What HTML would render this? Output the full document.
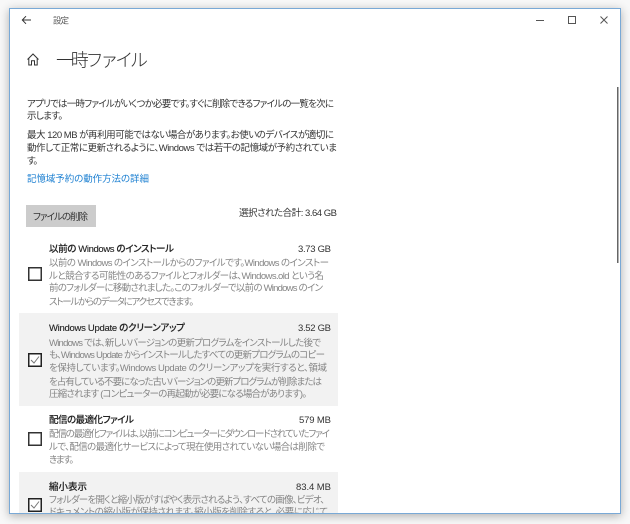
<!DOCTYPE html>
<html><head><meta charset="utf-8"><style>
html,body{margin:0;padding:0;width:630px;height:524px;overflow:hidden;background:#f8f8f8}
#win{position:absolute;left:9px;top:8px;width:610px;height:504px;background:#fff;border:1px solid #79a9d6;box-shadow:0 2px 9px rgba(0,0,0,.3)}
svg{position:absolute;left:0;top:0}
text{font-family:"Liberation Sans","Noto Sans CJK JP",sans-serif;font-size:9.500px;fill:#333;font-feature-settings:"palt";white-space:pre;filter:blur(.25px)}
.d{fill:#858585}
.t{font-weight:500;fill:#222;stroke:#222;stroke-width:.12px}
</style></head><body>
<div id="win"></div>
<svg width="630" height="524" viewBox="0 0 630 524" xmlns="http://www.w3.org/2000/svg">
<defs><clipPath id="c"><rect x="10" y="9" width="610" height="504"/></clipPath></defs>
<g clip-path="url(#c)">
<!-- title bar -->
<path d="M31 20H22.500M26 16.200L22.300 20L26 23.800" fill="none" stroke="#333" stroke-width="1"/>
<text x="53" y="23.500" style="font-size:8.500px;fill:#555" textLength="16">設定</text>
<path d="M536 20.500H544" stroke="#555" stroke-width="1"/>
<rect x="568.500" y="16.500" width="7" height="7" fill="none" stroke="#555" stroke-width="1"/>
<path d="M600.500 16.500L607.500 23.500M607.500 16.500L600.500 23.500" stroke="#555" stroke-width="1"/>
<rect x="617" y="87" width="1.500" height="176" fill="#666"/>
<!-- header -->
<path d="M27.500 59.500L33 54L38.500 59.500M28.800 58.500V65H31.500V60.800H34.500V65H37.200V58.500" fill="none" stroke="#333" stroke-width="1"/>
<text x="56" y="66.500" style="font-size:18px;fill:#333;font-weight:300;font-feature-settings:normal" textLength="92">一時ファイル</text>
<!-- intro -->
<text x="27" y="107" textLength="307">アプリでは一時ファイルがいくつか必要です。すぐに削除できるファイルの一覧を次に</text>
<text x="27" y="119" textLength="36">示します。</text>
<text x="27" y="138" textLength="307">最大 120 MB が再利用可能ではない場合があります。お使いのデバイスが適切に</text>
<text x="27" y="151" textLength="310">動作して正常に更新されるように、Windows では若干の記憶域が予約されていま</text>
<text x="27" y="164" textLength="11">す。</text>
<text x="27" y="182" style="fill:#1b7fd1" textLength="122">記憶域予約の動作方法の詳細</text>
<!-- button -->
<rect x="26" y="205" width="70" height="22" fill="#cccccc"/>
<text x="33" y="220" textLength="55">ファイルの削除</text>
<text x="239" y="216" textLength="98">選択された合計: 3.64 GB</text>
<!-- item backgrounds -->
<rect x="19" y="313" width="319" height="93" fill="#f2f2f2"/>
<rect x="19" y="472" width="319" height="42" fill="#f2f2f2"/>
<!-- item 1 -->
<text class="t" x="49" y="252" textLength="125">以前の Windows のインストール</text>
<text x="298" y="252" textLength="33">3.73 GB</text>
<text class="d" x="49" y="266" textLength="280">以前の Windows のインストールからのファイルです。Windows のインストー</text>
<text class="d" x="49" y="279" textLength="275">ルと競合する可能性のあるファイルとフォルダーは、Windows.old という名</text>
<text class="d" x="49" y="291" textLength="274">前のフォルダーに移動されました。このフォルダーで以前の Windows のイン</text>
<text class="d" x="49" y="305" textLength="145">ストールからのデータにアクセスできます。</text>
<rect x="28.750" y="267.750" width="12.500" height="12.500" fill="#fff" stroke="#333" stroke-width="1.500"/>
<!-- item 2 -->
<text class="t" x="49" y="331" textLength="136">Windows Update のクリーンアップ</text>
<text x="298" y="331" textLength="33">3.52 GB</text>
<text class="d" x="49" y="346" textLength="272">Windows では、新しいバージョンの更新プログラムをインストールした後で</text>
<text class="d" x="49" y="358" textLength="276">も、Windows Update からインストールしたすべての更新プログラムのコピー</text>
<text class="d" x="49" y="371" textLength="278">を保持しています。Windows Update のクリーンアップを実行すると、領域</text>
<text class="d" x="49" y="385" textLength="273">を占有している不要になった古いバージョンの更新プログラムが削除または</text>
<text class="d" x="49" y="397" textLength="258">圧縮されます (コンピューターの再起動が必要になる場合があります)。</text>
<rect x="28.750" y="353.750" width="12.500" height="12.500" fill="#fff" stroke="#222" stroke-width="1.500"/>
<path d="M31 360L34 363L39 356.500" fill="none" stroke="#777" stroke-width="1"/>
<!-- item 3 -->
<text class="t" x="49" y="423" textLength="85">配信の最適化ファイル</text>
<text x="299" y="423" textLength="32">579 MB</text>
<text class="d" x="49" y="437" textLength="281">配信の最適化ファイルは、以前にコンピューターにダウンロードされていたファイ</text>
<text class="d" x="49" y="450" textLength="276">ルで、配信の最適化サービスによって現在使用されていない場合は削除で</text>
<text class="d" x="49" y="463" textLength="25">きます。</text>
<rect x="28.750" y="432.750" width="12.500" height="12.500" fill="#fff" stroke="#333" stroke-width="1.500"/>
<!-- item 4 -->
<text class="t" x="49" y="490" textLength="38">縮小表示</text>
<text x="296" y="490" textLength="35">83.4 MB</text>
<text class="d" x="49" y="503" textLength="276">フォルダーを開くと縮小版がすばやく表示されるよう、すべての画像、ビデオ、</text>
<text class="d" x="49" y="515" textLength="279">ドキュメントの縮小版が保持されます。縮小版を削除すると、必要に応じて</text>
<rect x="28.750" y="498.750" width="12.500" height="12.500" fill="#fff" stroke="#222" stroke-width="1.500"/>
<path d="M31 505L34 508L39 501.500" fill="none" stroke="#777" stroke-width="1"/>
</g>
</svg>
</body></html>
